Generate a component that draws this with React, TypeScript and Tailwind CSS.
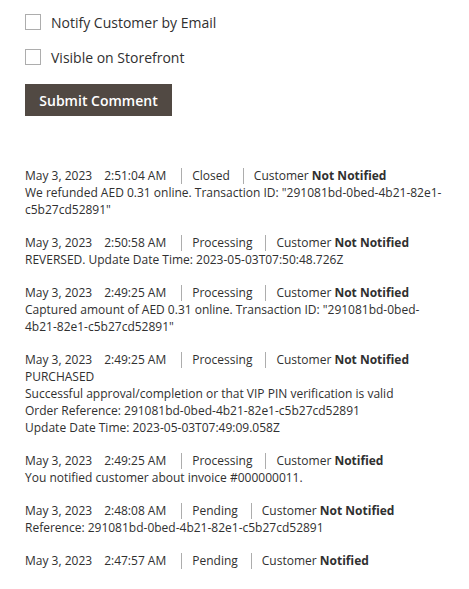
const entries = [
  {
    time: "2:51:04 AM",
    status: "Closed",
    notified: false,
    lines: ['We refunded AED 0.31 online. Transaction ID: "291081bd-0bed-4b21-82e1-c5b27cd52891"'],
  },
  {
    time: "2:50:58 AM",
    status: "Processing",
    notified: false,
    lines: ["REVERSED. Update Date Time: 2023-05-03T07:50:48.726Z"],
  },
  {
    time: "2:49:25 AM",
    status: "Processing",
    notified: false,
    lines: ['Captured amount of AED 0.31 online. Transaction ID: "291081bd-0bed-4b21-82e1-c5b27cd52891"'],
  },
  {
    time: "2:49:25 AM",
    status: "Processing",
    notified: false,
    lines: [
      "PURCHASED",
      "Successful approval/completion or that VIP PIN verification is valid",
      "Order Reference: 291081bd-0bed-4b21-82e1-c5b27cd52891",
      "Update Date Time: 2023-05-03T07:49:09.058Z",
    ],
  },
  {
    time: "2:49:25 AM",
    status: "Processing",
    notified: true,
    lines: ["You notified customer about invoice #000000011."],
  },
  {
    time: "2:48:08 AM",
    status: "Pending",
    notified: false,
    lines: ["Reference: 291081bd-0bed-4b21-82e1-c5b27cd52891"],
  },
  {
    time: "2:47:57 AM",
    status: "Pending",
    notified: true,
    lines: [],
  },
];

const Checkbox = ({ label }: { label: string }) => (
  <label className="flex items-center gap-[10px] h-[20px]">
    <span className="size-4 border border-[#adadad] bg-white shrink-0" />
    <span className="text-[14px] text-[#303030]">{label}</span>
  </label>
);

const App = () => {
  return (
    <div
      className="bg-white min-h-[589px] pl-[25px] pr-[24px] pt-[12px] text-[#303030]"
      style={{ fontFamily: '"Open Sans", sans-serif' }}
    >
      <div className="flex flex-col gap-[15px]">
        <Checkbox label="Notify Customer by Email" />
        <Checkbox label="Visible on Storefront" />
      </div>

      <button className="mt-[17px] h-[32px] w-[147px] bg-[#514943] text-white text-[14px] font-semibold">
        Submit Comment
      </button>

      <ul className="mt-[51px] flex flex-col gap-[16px] text-[12px] leading-[17px]">
        {entries.map((e, i) => (
          <li key={i}>
            <div className="flex items-center">
              <span>May 3, 2023</span>
              <span className="ml-[12px] pr-[15px]">{e.time}</span>
              <span className="border-l border-[#adadad] pl-[10px] pr-[13px] leading-[16px]">
                {e.status}
              </span>
              <span className="border-l border-[#adadad] pl-[10px] leading-[16px]">
                Customer <b className="font-bold">{e.notified ? "Notified" : "Not Notified"}</b>
              </span>
            </div>
            {e.lines.map((l, j) => (
              <div key={j} className="break-words">
                {l}
              </div>
            ))}
          </li>
        ))}
      </ul>
    </div>
  );
};

export default App;
